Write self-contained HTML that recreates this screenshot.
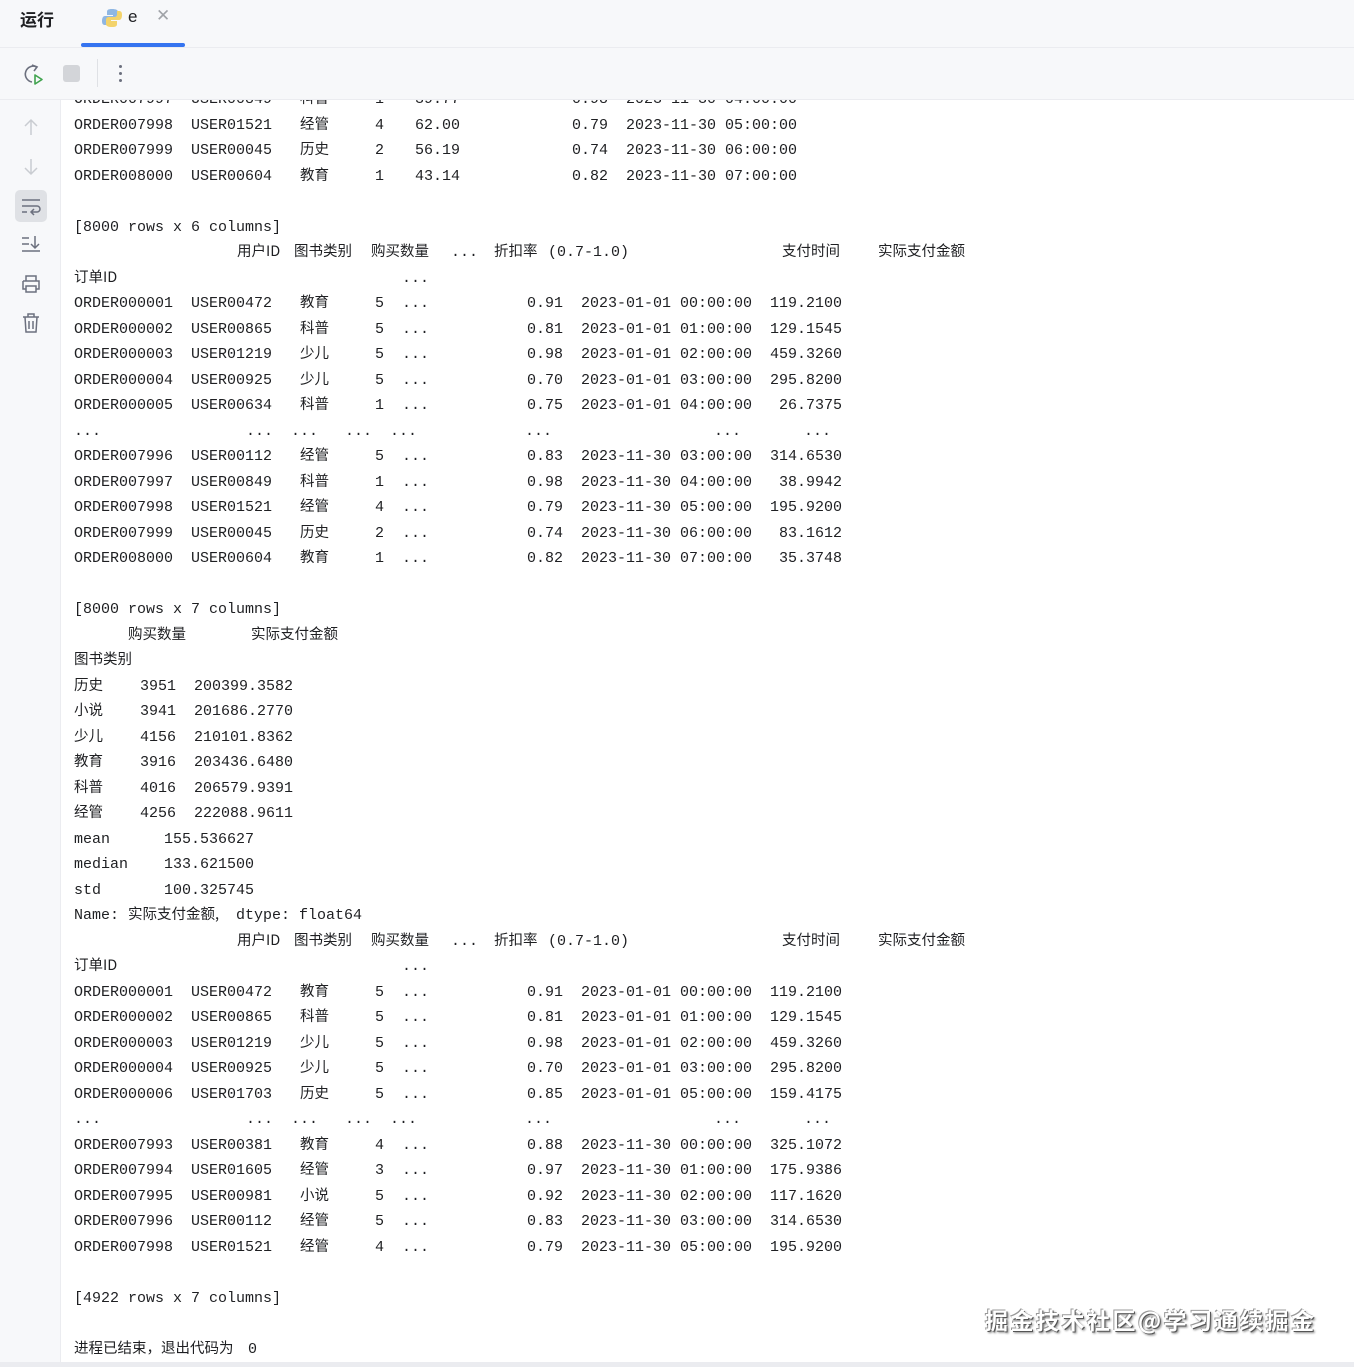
<!DOCTYPE html>
<html><head><meta charset="utf-8"><style>
body{margin:0;width:1354px;height:1367px;background:#fff;position:relative;overflow:hidden;font-family:"Liberation Sans","Noto Sans CJK SC",sans-serif;}
#hdr{position:absolute;left:0;top:0;width:1354px;height:47px;background:#f7f8fa;border-bottom:1px solid #ebecf0;}
#tb{position:absolute;left:0;top:48px;width:1354px;height:51px;background:#f7f8fa;border-bottom:1px solid #ebecf0;}
#side{position:absolute;left:0;top:100px;width:60px;height:1262px;background:#f7f8fa;border-right:1px solid #ebecf0;}
#bot{position:absolute;left:0;top:1362px;width:1354px;height:5px;background:#ebecf0;}
#clip{position:absolute;left:61px;top:100px;width:1293px;height:1262px;overflow:hidden;}
#con{position:absolute;left:-61px;top:-100px;width:1354px;}
.l{position:absolute;left:0;height:25.5px;width:1354px;font:15px/25.5px "Liberation Mono","Noto Sans CJK SC",monospace;color:#1e1f22;white-space:pre;}
.l span{position:absolute;top:0;}
.l span.c{font-family:"Noto Sans CJK SC",sans-serif;font-size:14.5px;top:-2px;}
.r{right:512px;}
</style></head><body>
<div id="hdr">
<div style="position:absolute;left:20px;top:6px;font-size:17px;font-weight:bold;color:#1e1f22">运行</div>
<svg style="position:absolute;left:101px;top:7px" width="22" height="22" viewBox="0 0 22 22"><path d="M11 2c-4 0-5 1-5 3v3h6v1H4c-2 0-3 2-3 5s1 4 3 4h2v-3c0-2 1-3 3-3h5c2 0 3-1 3-3V5c0-2-2-3-6-3z" fill="#8fb7e3"/><path d="M11 20c4 0 5-1 5-3v-3h-6v-1h8c2 0 3-2 3-5s-1-4-3-4h-2v3c0 2-1 3-3 3H8c-2 0-3 1-3 3v4c0 2 2 3 6 3z" fill="#f3d36b"/></svg>
<div style="position:absolute;left:128px;top:7px;font-size:17px;color:#1e1f22">e</div>
<div style="position:absolute;left:156px;top:6px;font-size:17px;color:#a0a3a8">✕</div>
<div style="position:absolute;left:81px;top:43px;width:104px;height:4px;background:#3574f0;border-radius:2px"></div>
</div>
<div id="tb">
<svg style="position:absolute;left:20px;top:14px" width="26" height="26" viewBox="0 0 26 26"><path d="M17 5a8 8 0 1 0-5 15" fill="none" stroke="#6c707e" stroke-width="1.6"/><path d="M12 3l5 2-3 4" fill="none" stroke="#6c707e" stroke-width="1.6"/><path d="M15 13v9l7-4.5z" fill="none" stroke="#3fa34d" stroke-width="1.6" stroke-linejoin="round"/></svg>
<div style="position:absolute;left:63px;top:17px;width:17px;height:17px;background:#d3d5d9;border-radius:3px"></div>
<div style="position:absolute;left:97px;top:11px;width:1px;height:28px;background:#dfe1e5"></div>
<div style="position:absolute;left:119px;top:17px;width:3px;height:3px;border-radius:2px;background:#6c707e;box-shadow:0 7px 0 #6c707e,0 14px 0 #6c707e"></div>
</div>
<div id="side">
<svg style="position:absolute;left:21px;top:17px" width="20" height="20" viewBox="0 0 20 20"><path d="M10 18V3M4 9l6-6 6 6" fill="none" stroke="#c9ccd1" stroke-width="1.5"/></svg>
<svg style="position:absolute;left:21px;top:57px" width="20" height="20" viewBox="0 0 20 20"><path d="M10 2v15M4 11l6 6 6-6" fill="none" stroke="#c9ccd1" stroke-width="1.5"/></svg>
<div style="position:absolute;left:15px;top:90px;width:32px;height:32px;background:#dfe1e5;border-radius:5px"></div>
<svg style="position:absolute;left:20px;top:96px" width="22" height="20" viewBox="0 0 22 20"><path d="M2 4h18M2 10h15a3 3 0 0 1 0 6h-5M2 16h5M14 13l-3 3 3 3" fill="none" stroke="#6c707e" stroke-width="1.5"/></svg>
<svg style="position:absolute;left:20px;top:134px" width="22" height="20" viewBox="0 0 22 20"><path d="M2 4h7M2 10h7M2 17h18M15 2v12M11 10l4 4 4-4" fill="none" stroke="#6c707e" stroke-width="1.5"/></svg>
<svg style="position:absolute;left:20px;top:174px" width="22" height="20" viewBox="0 0 22 20"><path d="M6 7V2h10v5M3 7h16v8h-3M6 15H3V7M6 12h10v6H6z" fill="none" stroke="#6c707e" stroke-width="1.5"/></svg>
<svg style="position:absolute;left:20px;top:212px" width="22" height="22" viewBox="0 0 22 22"><path d="M3 5h16M8 5V2h6v3M5 5l1 15h10l1-15M9 9v8M13 9v8" fill="none" stroke="#6c707e" stroke-width="1.5"/></svg>
</div>
<div id="clip"><div id="con">
<div class="l" style="top:87px"><span style="left:74px">ORDER007997</span><span style="left:191px">USER00849</span><span class="c" style="left:300px">科普</span><span style="left:375px">1</span><span style="left:415px">39.77</span><span style="left:572px">0.98</span><span style="left:626px">2023-11-30 04:00:00</span></div>
<div class="l" style="top:112.5px"><span style="left:74px">ORDER007998</span><span style="left:191px">USER01521</span><span class="c" style="left:300px">经管</span><span style="left:375px">4</span><span style="left:415px">62.00</span><span style="left:572px">0.79</span><span style="left:626px">2023-11-30 05:00:00</span></div>
<div class="l" style="top:138px"><span style="left:74px">ORDER007999</span><span style="left:191px">USER00045</span><span class="c" style="left:300px">历史</span><span style="left:375px">2</span><span style="left:415px">56.19</span><span style="left:572px">0.74</span><span style="left:626px">2023-11-30 06:00:00</span></div>
<div class="l" style="top:163.5px"><span style="left:74px">ORDER008000</span><span style="left:191px">USER00604</span><span class="c" style="left:300px">教育</span><span style="left:375px">1</span><span style="left:415px">43.14</span><span style="left:572px">0.82</span><span style="left:626px">2023-11-30 07:00:00</span></div>
<div class="l" style="top:214.5px"><span style="left:74px">[8000 rows x 6 columns]</span></div>
<div class="l" style="top:240px"><span class="c" style="left:237px">用户ID</span><span class="c" style="left:294px">图书类别</span><span class="c" style="left:371px">购买数量</span><span style="left:451px">...</span><span class="c" style="left:494px">折扣率</span><span style="left:548px">(0.7-1.0)</span><span class="c" style="left:782px">支付时间</span><span class="c" style="left:878px">实际支付金额</span></div>
<div class="l" style="top:265.5px"><span class="c" style="left:74px">订单ID</span><span style="left:402px">...</span></div>
<div class="l" style="top:291px"><span style="left:74px">ORDER000001</span><span style="left:191px">USER00472</span><span class="c" style="left:300px">教育</span><span style="left:375px">5</span><span style="left:402px">...</span><span style="left:527px">0.91</span><span style="left:581px">2023-01-01 00:00:00</span><span class="r">119.2100</span></div>
<div class="l" style="top:316.5px"><span style="left:74px">ORDER000002</span><span style="left:191px">USER00865</span><span class="c" style="left:300px">科普</span><span style="left:375px">5</span><span style="left:402px">...</span><span style="left:527px">0.81</span><span style="left:581px">2023-01-01 01:00:00</span><span class="r">129.1545</span></div>
<div class="l" style="top:342px"><span style="left:74px">ORDER000003</span><span style="left:191px">USER01219</span><span class="c" style="left:300px">少儿</span><span style="left:375px">5</span><span style="left:402px">...</span><span style="left:527px">0.98</span><span style="left:581px">2023-01-01 02:00:00</span><span class="r">459.3260</span></div>
<div class="l" style="top:367.5px"><span style="left:74px">ORDER000004</span><span style="left:191px">USER00925</span><span class="c" style="left:300px">少儿</span><span style="left:375px">5</span><span style="left:402px">...</span><span style="left:527px">0.70</span><span style="left:581px">2023-01-01 03:00:00</span><span class="r">295.8200</span></div>
<div class="l" style="top:393px"><span style="left:74px">ORDER000005</span><span style="left:191px">USER00634</span><span class="c" style="left:300px">科普</span><span style="left:375px">1</span><span style="left:402px">...</span><span style="left:527px">0.75</span><span style="left:581px">2023-01-01 04:00:00</span><span class="r">26.7375</span></div>
<div class="l" style="top:418.5px"><span style="left:74px">...</span><span style="left:246px">...</span><span style="left:291px">...</span><span style="left:345px">...</span><span style="left:390px">...</span><span style="left:525px">...</span><span style="left:714px">...</span><span style="left:804px">...</span></div>
<div class="l" style="top:444px"><span style="left:74px">ORDER007996</span><span style="left:191px">USER00112</span><span class="c" style="left:300px">经管</span><span style="left:375px">5</span><span style="left:402px">...</span><span style="left:527px">0.83</span><span style="left:581px">2023-11-30 03:00:00</span><span class="r">314.6530</span></div>
<div class="l" style="top:469.5px"><span style="left:74px">ORDER007997</span><span style="left:191px">USER00849</span><span class="c" style="left:300px">科普</span><span style="left:375px">1</span><span style="left:402px">...</span><span style="left:527px">0.98</span><span style="left:581px">2023-11-30 04:00:00</span><span class="r">38.9942</span></div>
<div class="l" style="top:495px"><span style="left:74px">ORDER007998</span><span style="left:191px">USER01521</span><span class="c" style="left:300px">经管</span><span style="left:375px">4</span><span style="left:402px">...</span><span style="left:527px">0.79</span><span style="left:581px">2023-11-30 05:00:00</span><span class="r">195.9200</span></div>
<div class="l" style="top:520.5px"><span style="left:74px">ORDER007999</span><span style="left:191px">USER00045</span><span class="c" style="left:300px">历史</span><span style="left:375px">2</span><span style="left:402px">...</span><span style="left:527px">0.74</span><span style="left:581px">2023-11-30 06:00:00</span><span class="r">83.1612</span></div>
<div class="l" style="top:546px"><span style="left:74px">ORDER008000</span><span style="left:191px">USER00604</span><span class="c" style="left:300px">教育</span><span style="left:375px">1</span><span style="left:402px">...</span><span style="left:527px">0.82</span><span style="left:581px">2023-11-30 07:00:00</span><span class="r">35.3748</span></div>
<div class="l" style="top:597px"><span style="left:74px">[8000 rows x 7 columns]</span></div>
<div class="l" style="top:622.5px"><span class="c" style="left:128px">购买数量</span><span class="c" style="left:251px">实际支付金额</span></div>
<div class="l" style="top:648px"><span class="c" style="left:74px">图书类别</span></div>
<div class="l" style="top:673.5px"><span class="c" style="left:74px">历史</span><span style="left:140px">3951</span><span style="left:194px">200399.3582</span></div>
<div class="l" style="top:699px"><span class="c" style="left:74px">小说</span><span style="left:140px">3941</span><span style="left:194px">201686.2770</span></div>
<div class="l" style="top:724.5px"><span class="c" style="left:74px">少儿</span><span style="left:140px">4156</span><span style="left:194px">210101.8362</span></div>
<div class="l" style="top:750px"><span class="c" style="left:74px">教育</span><span style="left:140px">3916</span><span style="left:194px">203436.6480</span></div>
<div class="l" style="top:775.5px"><span class="c" style="left:74px">科普</span><span style="left:140px">4016</span><span style="left:194px">206579.9391</span></div>
<div class="l" style="top:801px"><span class="c" style="left:74px">经管</span><span style="left:140px">4256</span><span style="left:194px">222088.9611</span></div>
<div class="l" style="top:826.5px"><span style="left:74px">mean</span><span style="left:164px">155.536627</span></div>
<div class="l" style="top:852px"><span style="left:74px">median</span><span style="left:164px">133.621500</span></div>
<div class="l" style="top:877.5px"><span style="left:74px">std</span><span style="left:164px">100.325745</span></div>
<div class="l" style="top:903px"><span style="left:74px">Name:</span><span class="c" style="left:128px">实际支付金额,</span><span style="left:236px">dtype: float64</span></div>
<div class="l" style="top:928.5px"><span class="c" style="left:237px">用户ID</span><span class="c" style="left:294px">图书类别</span><span class="c" style="left:371px">购买数量</span><span style="left:451px">...</span><span class="c" style="left:494px">折扣率</span><span style="left:548px">(0.7-1.0)</span><span class="c" style="left:782px">支付时间</span><span class="c" style="left:878px">实际支付金额</span></div>
<div class="l" style="top:954px"><span class="c" style="left:74px">订单ID</span><span style="left:402px">...</span></div>
<div class="l" style="top:979.5px"><span style="left:74px">ORDER000001</span><span style="left:191px">USER00472</span><span class="c" style="left:300px">教育</span><span style="left:375px">5</span><span style="left:402px">...</span><span style="left:527px">0.91</span><span style="left:581px">2023-01-01 00:00:00</span><span class="r">119.2100</span></div>
<div class="l" style="top:1005px"><span style="left:74px">ORDER000002</span><span style="left:191px">USER00865</span><span class="c" style="left:300px">科普</span><span style="left:375px">5</span><span style="left:402px">...</span><span style="left:527px">0.81</span><span style="left:581px">2023-01-01 01:00:00</span><span class="r">129.1545</span></div>
<div class="l" style="top:1030.5px"><span style="left:74px">ORDER000003</span><span style="left:191px">USER01219</span><span class="c" style="left:300px">少儿</span><span style="left:375px">5</span><span style="left:402px">...</span><span style="left:527px">0.98</span><span style="left:581px">2023-01-01 02:00:00</span><span class="r">459.3260</span></div>
<div class="l" style="top:1056px"><span style="left:74px">ORDER000004</span><span style="left:191px">USER00925</span><span class="c" style="left:300px">少儿</span><span style="left:375px">5</span><span style="left:402px">...</span><span style="left:527px">0.70</span><span style="left:581px">2023-01-01 03:00:00</span><span class="r">295.8200</span></div>
<div class="l" style="top:1081.5px"><span style="left:74px">ORDER000006</span><span style="left:191px">USER01703</span><span class="c" style="left:300px">历史</span><span style="left:375px">5</span><span style="left:402px">...</span><span style="left:527px">0.85</span><span style="left:581px">2023-01-01 05:00:00</span><span class="r">159.4175</span></div>
<div class="l" style="top:1107px"><span style="left:74px">...</span><span style="left:246px">...</span><span style="left:291px">...</span><span style="left:345px">...</span><span style="left:390px">...</span><span style="left:525px">...</span><span style="left:714px">...</span><span style="left:804px">...</span></div>
<div class="l" style="top:1132.5px"><span style="left:74px">ORDER007993</span><span style="left:191px">USER00381</span><span class="c" style="left:300px">教育</span><span style="left:375px">4</span><span style="left:402px">...</span><span style="left:527px">0.88</span><span style="left:581px">2023-11-30 00:00:00</span><span class="r">325.1072</span></div>
<div class="l" style="top:1158px"><span style="left:74px">ORDER007994</span><span style="left:191px">USER01605</span><span class="c" style="left:300px">经管</span><span style="left:375px">3</span><span style="left:402px">...</span><span style="left:527px">0.97</span><span style="left:581px">2023-11-30 01:00:00</span><span class="r">175.9386</span></div>
<div class="l" style="top:1183.5px"><span style="left:74px">ORDER007995</span><span style="left:191px">USER00981</span><span class="c" style="left:300px">小说</span><span style="left:375px">5</span><span style="left:402px">...</span><span style="left:527px">0.92</span><span style="left:581px">2023-11-30 02:00:00</span><span class="r">117.1620</span></div>
<div class="l" style="top:1209px"><span style="left:74px">ORDER007996</span><span style="left:191px">USER00112</span><span class="c" style="left:300px">经管</span><span style="left:375px">5</span><span style="left:402px">...</span><span style="left:527px">0.83</span><span style="left:581px">2023-11-30 03:00:00</span><span class="r">314.6530</span></div>
<div class="l" style="top:1234.5px"><span style="left:74px">ORDER007998</span><span style="left:191px">USER01521</span><span class="c" style="left:300px">经管</span><span style="left:375px">4</span><span style="left:402px">...</span><span style="left:527px">0.79</span><span style="left:581px">2023-11-30 05:00:00</span><span class="r">195.9200</span></div>
<div class="l" style="top:1285.5px"><span style="left:74px">[4922 rows x 7 columns]</span></div>
<div class="l" style="top:1336.5px"><span class="c" style="left:74px">进程已结束，退出代码为</span><span style="left:248px">0</span></div>
</div></div>
<div style="position:absolute;left:985px;top:1304px;font:bold 23px/30px 'Noto Sans CJK SC',sans-serif;color:#fff;text-shadow:1px 1px 0 #555,-1px -1px 0 #999,2px 2px 2px #888;letter-spacing:2.5px;white-space:nowrap">掘金技术社区@学习通续掘金</div>
<div id="bot"></div>
</body></html>
